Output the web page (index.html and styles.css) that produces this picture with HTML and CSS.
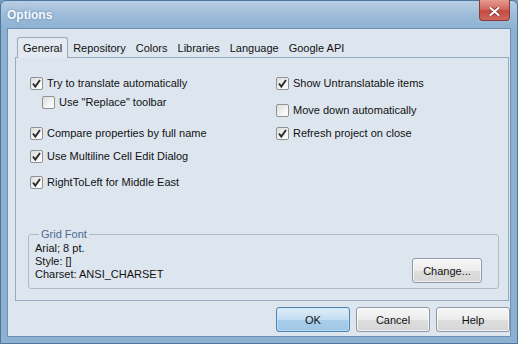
FILE: index.html
```html
<!DOCTYPE html>
<html lang="en">
<head>
    <meta charset="UTF-8">
    <title>Options</title>
    <link rel="stylesheet" href="styles.css">
</head>
<body>
    <div class="window">
        <div class="titlebar">
            <span class="title">Options</span>
            <button class="close" aria-label="Close">
                <svg width="11" height="9" viewBox="0 0 11 9">
                    <path d="M1.5 1 L9.5 8 M9.5 1 L1.5 8" stroke="#7a2c2c" stroke-width="3.6" stroke-linecap="round"/>
                    <path d="M1.5 1 L9.5 8 M9.5 1 L1.5 8" stroke="#ffffff" stroke-width="2.2" stroke-linecap="round"/>
                </svg>
            </button>
        </div>

        <div class="client">
            <div class="tabs">
                <span class="tab active">General</span>
                <span class="tab">Repository</span>
                <span class="tab">Colors</span>
                <span class="tab">Libraries</span>
                <span class="tab">Language</span>
                <span class="tab">Google API</span>
            </div>

            <div class="panel">
                <div class="options">
                    <div class="column">
                        <label class="check checked">
                            <span class="box"><svg width="13" height="13" viewBox="0 0 13 13"><path d="M3 6.5 L5.3 9.6 L10 3" fill="none" stroke="#2b2b2b" stroke-width="1.9"/></svg></span>
                            Try to translate automatically
                        </label>
                        <label class="check sub gap-1">
                            <span class="box"></span>
                            Use "Replace" toolbar
                        </label>
                        <label class="check checked gap-13">
                            <span class="box"><svg width="13" height="13" viewBox="0 0 13 13"><path d="M3 6.5 L5.3 9.6 L10 3" fill="none" stroke="#2b2b2b" stroke-width="1.9"/></svg></span>
                            Compare properties by full name
                        </label>
                        <label class="check checked gap-5">
                            <span class="box"><svg width="13" height="13" viewBox="0 0 13 13"><path d="M3 6.5 L5.3 9.6 L10 3" fill="none" stroke="#2b2b2b" stroke-width="1.9"/></svg></span>
                            Use Multiline Cell Edit Dialog
                        </label>
                        <label class="check checked gap-8">
                            <span class="box"><svg width="13" height="13" viewBox="0 0 13 13"><path d="M3 6.5 L5.3 9.6 L10 3" fill="none" stroke="#2b2b2b" stroke-width="1.9"/></svg></span>
                            RightToLeft for Middle East
                        </label>
                    </div>
                    <div class="column">
                        <label class="check checked">
                            <span class="box"><svg width="13" height="13" viewBox="0 0 13 13"><path d="M3 6.5 L5.3 9.6 L10 3" fill="none" stroke="#2b2b2b" stroke-width="1.9"/></svg></span>
                            Show Untranslatable items
                        </label>
                        <label class="check gap-9">
                            <span class="box"></span>
                            Move down automatically
                        </label>
                        <label class="check checked gap-5">
                            <span class="box"><svg width="13" height="13" viewBox="0 0 13 13"><path d="M3 6.5 L5.3 9.6 L10 3" fill="none" stroke="#2b2b2b" stroke-width="1.9"/></svg></span>
                            Refresh project on close
                        </label>
                    </div>
                </div>

                <fieldset class="groupbox">
                    <legend>Grid Font</legend>
                    <div class="font-info">
                        <div>Arial; 8 pt.</div>
                        <div>Style: []</div>
                        <div>Charset: ANSI_CHARSET</div>
                    </div>
                    <button class="btn change">Change...</button>
                </fieldset>
            </div>

            <div class="buttons">
                <button class="btn default">OK</button>
                <button class="btn">Cancel</button>
                <button class="btn">Help</button>
            </div>
        </div>
    </div>
</body>
</html>
```

FILE: styles.css
```css
:root {
    --frame: #8eb1d1;
    --frame-dark: #4f769e;
    --client-bg: #dde6ef;
    --panel-border: #97aabe;
    --group-border: #abbccd;
    --text: #111111;
    --legend: #4b6a8e;
}

* {
    margin: 0;
    padding: 0;
    box-sizing: border-box;
}

body {
    width: 518px;
    height: 344px;
    overflow: hidden;
    background-color: #7a9dc0;
    font-family: "Liberation Sans", Arial, sans-serif;
    font-size: 11px;
    color: var(--text);
}

.window {
    width: 518px;
    height: 344px;
    display: flex;
    flex-direction: column;
    border: 1px solid var(--frame-dark);
    border-radius: 6px 6px 0 0;
    background: linear-gradient(to bottom, #b7cee3 0, #9dbcd9 14px, #8eb1d1 28px, var(--frame) 100%);
}

.titlebar {
    height: 27px;
    display: flex;
    align-items: flex-start;
    padding-left: 6px;
}

.title {
    font-size: 12px;
    font-weight: bold;
    color: #f6f9fc;
    line-height: 14px;
    margin-top: 7px;
    text-shadow: 0 0 3px rgba(60, 100, 140, 0.6);
}

.close {
    margin-left: auto;
    margin-right: 7px;
    margin-top: -1px;
    width: 31px;
    height: 21px;
    border: 1px solid #8a3b38;
    border-top: none;
    border-radius: 0 0 4px 4px;
    background: linear-gradient(to bottom, #e59a90 0, #d46a60 45%, #c24a42 55%, #d2675d 100%);
    display: flex;
    align-items: center;
    justify-content: center;
    padding-top: 2px;
}

.client {
    flex: 1;
    margin: 0 6px 6px 6px;
    border: 1px solid #6d8fb3;
    background-color: var(--client-bg);
    padding: 8px 0 0 7px;
    display: flex;
    flex-direction: column;
}

.tabs {
    display: flex;
    height: 20px;
    align-items: flex-end;
    padding-left: 2px;
    position: relative;
    z-index: 1;
}

.tab {
    padding: 0 5px;
    height: 18px;
    line-height: 18px;
    white-space: nowrap;
}

.tab.active {
    height: 21px;
    line-height: 20px;
    margin-bottom: -1px;
    border: 1px solid var(--panel-border);
    border-bottom: none;
    border-radius: 3px 3px 0 0;
    background-color: #e3eaf2;
}

.panel {
    width: 494px;
    height: 244px;
    border: 1px solid var(--panel-border);
    padding: 16px 0 11px 0;
    display: flex;
    flex-direction: column;
}

.options {
    display: grid;
    grid-template-columns: 246px 1fr;
    margin-left: 14px;
}

.column {
    display: flex;
    flex-direction: column;
}

.check {
    display: flex;
    align-items: center;
    gap: 4px;
    height: 18px;
    white-space: nowrap;
}

.check.sub {
    margin-left: 12px;
}

.gap-1 { margin-top: 1px; }
.gap-5 { margin-top: 5px; }
.gap-8 { margin-top: 8px; }
.gap-9 { margin-top: 9px; }
.gap-13 { margin-top: 13px; }

.box {
    width: 13px;
    height: 13px;
    border: 1px solid #8f9295;
    border-radius: 2px;
    background: linear-gradient(to bottom right, #dcdcdc 0, #f4f4f4 60%, #ffffff 100%);
    position: relative;
    flex-shrink: 0;
}

.box svg {
    position: absolute;
    left: -1px;
    top: -1px;
}

.groupbox {
    margin: auto 9px 0 12px;
    border: 1px solid var(--group-border);
    border-radius: 3px;
    padding: 1px 16px 5px 6px;
    display: flex;
    align-items: flex-end;
    justify-content: space-between;
}

.groupbox legend {
    color: var(--legend);
    margin-left: 4px;
    padding: 0 2px;
    line-height: 13px;
}

.font-info {
    line-height: 13px;
    margin-bottom: 2px;
}

.btn {
    font-family: "Liberation Sans", Arial, sans-serif;
    font-size: 11px;
    color: var(--text);
    height: 25px;
    border: 1px solid #8d99a6;
    border-radius: 3px;
    background: linear-gradient(to bottom, #f7f7f7 0, #ececec 50%, #dedede 51%, #d6d6d6 100%);
    box-shadow: inset 0 0 0 1px rgba(255, 255, 255, 0.7);
}

.change {
    width: 70px;
}

.buttons {
    display: flex;
    justify-content: flex-end;
    gap: 6px;
    margin-top: 6px;
}

.buttons .btn {
    width: 74px;
}

.btn.default {
    border-color: #4f85b5;
    background: linear-gradient(to bottom, #e0eef9 0, #c3ddf2 50%, #a9cdea 51%, #9fc7e6 100%);
    box-shadow: inset 0 0 0 1px rgba(200, 230, 250, 0.6);
}
```
